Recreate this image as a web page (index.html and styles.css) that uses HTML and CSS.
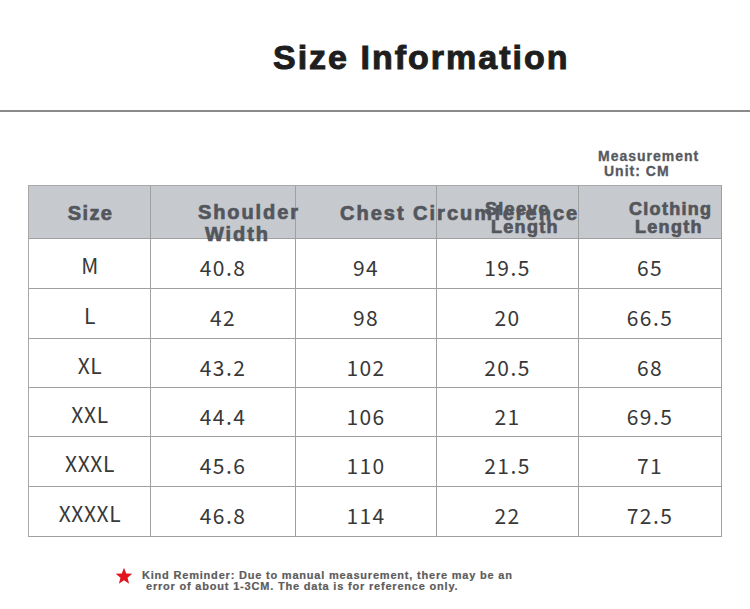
FILE: index.html
```html
<!DOCTYPE html>
<html lang="en">
<head>
<meta charset="utf-8">
<title>Size Information</title>
<link rel="stylesheet" href="styles.css">
</head>
<body>
<div class="page">
  <header class="title-bar">
    <h1 class="title">Size Information</h1>
  </header>

  <div class="unit">
    <div>Measurement</div>
    <div class="unit-2">Unit: CM</div>
  </div>

  <div class="table">
    <div class="th th-size">Size</div>
    <div class="th th-shoulder"><span class="l1">Shoulder</span><span class="l2">Width</span></div>
    <div class="th th-chest">Chest Circumference</div>
    <div class="th th-sleeve"><span class="l1">Sleeve</span><span class="l2">Length</span></div>
    <div class="th th-cloth"><span class="l1">Clothing</span><span class="l2">Length</span></div>

    <div class="td td-size">M</div><div class="td">40.8</div><div class="td">94</div><div class="td">19.5</div><div class="td">65</div>
    <div class="td td-size">L</div><div class="td">42</div><div class="td">98</div><div class="td">20</div><div class="td">66.5</div>
    <div class="td td-size">XL</div><div class="td">43.2</div><div class="td">102</div><div class="td">20.5</div><div class="td">68</div>
    <div class="td td-size">XXL</div><div class="td">44.4</div><div class="td">106</div><div class="td">21</div><div class="td">69.5</div>
    <div class="td td-size">XXXL</div><div class="td">45.6</div><div class="td">110</div><div class="td">21.5</div><div class="td">71</div>
    <div class="td td-size">XXXXL</div><div class="td">46.8</div><div class="td">114</div><div class="td">22</div><div class="td">72.5</div>
  </div>

  <footer class="note">
    <svg class="star" width="18" height="18" viewBox="0 0 24 24" aria-hidden="true">
      <polygon points="12,1 14.9,8.6 23,9.1 16.7,14.2 18.8,22.2 12,17.7 5.2,22.2 7.3,14.2 1,9.1 9.1,8.6" fill="#e3121c"/>
    </svg>
    <div class="note-text">
      <div>Kind Reminder: Due to manual measurement, there may be an</div>
      <div class="note-2">error of about 1-3CM. The data is for reference only.</div>
    </div>
  </footer>
</div>
</body>
</html>
```

FILE: styles.css
```css
* { box-sizing: border-box; margin: 0; padding: 0; }

html, body {
  background: #ffffff;
}

body {
  width: 750px;
  height: 609px;
  overflow: hidden;
  font-family: "Liberation Sans", Arial, sans-serif;
}

.page {
  width: 750px;
}

.title-bar {
  height: 112px;
  border-bottom: 2px solid #8a8a8a;
  padding-top: 37px;
  padding-left: 273px;
}

.title {
  font-size: 34px;
  line-height: 40px;
  font-weight: 700;
  letter-spacing: 2px;
  color: #1e1e1e;
  -webkit-text-stroke: 1px #1e1e1e;
}

.unit {
  margin-top: 37px;
  padding-left: 598px;
  font-size: 14px;
  line-height: 15px;
  font-weight: 700;
  letter-spacing: 1px;
  color: #57595e;
  -webkit-text-stroke: 0.3px #57595e;
}

.unit-2 {
  padding-left: 6px;
}

.table {
  margin-top: 6px;
  margin-left: 28px;
  width: 694px;
  display: grid;
  grid-template-columns: 122px 145px 141px 142px 143px;
  grid-template-rows: 53px 50px 50px 49px 49px 50px 50px;
  border-top: 1px solid #a8a8a8;
  border-left: 1px solid #a8a8a8;
}

.th, .td {
  border-right: 1px solid #a0a0a0;
  border-bottom: 1px solid #a0a0a0;
}

.th {
  position: relative;
  z-index: 1;
  background: #c6c9cd;
  color: #53565c;
  font-weight: 700;
  white-space: nowrap;
  overflow: visible;
  -webkit-text-stroke: 0.7px #53565c;
}

.th-size, .th-chest {
  font-size: 20px;
  line-height: 22px;
  padding-top: 16px;
}

.th-size {
  text-align: center;
  padding-left: 2px;
  letter-spacing: 1.4px;
}

.th-chest {
  z-index: 2;
  padding-left: 44px;
  letter-spacing: 2px;
}

.th-shoulder {
  z-index: 3;
  font-size: 20px;
  line-height: 22px;
  letter-spacing: 1.9px;
  padding-top: 15px;
  padding-left: 47px;
}

.th-sleeve, .th-cloth {
  font-size: 18px;
  line-height: 18px;
  letter-spacing: 1.3px;
  padding-top: 14px;
}

.th-sleeve { padding-left: 48px; }
.th-cloth { padding-left: 50px; }

.l1, .l2 { display: block; }
.l2 { padding-left: 6px; }
.th-shoulder .l2 { padding-left: 7px; }

.td {
  display: flex;
  align-items: center;
  justify-content: center;
  font-family: "Noto Sans CJK SC", "Noto Sans", sans-serif;
  font-size: 21px;
  letter-spacing: 1.4px;
  color: #383838;
  padding-top: 7px;
  background: #ffffff;
}

.td-size {
  padding-top: 3px;
  padding-left: 1px;
  letter-spacing: 0.6px;
}

.note {
  margin-top: 30px;
  padding-left: 115px;
  display: flex;
  align-items: flex-start;
  gap: 9px;
}

.star {
  display: block;
  flex: none;
}

.note-text {
  padding-top: 3px;
  font-size: 11px;
  line-height: 11.3px;
  font-weight: 700;
  letter-spacing: 0.8px;
  color: #5c5c5c;
  -webkit-text-stroke: 0.2px #5c5c5c;
}

.note-2 {
  padding-left: 4px;
}
```
